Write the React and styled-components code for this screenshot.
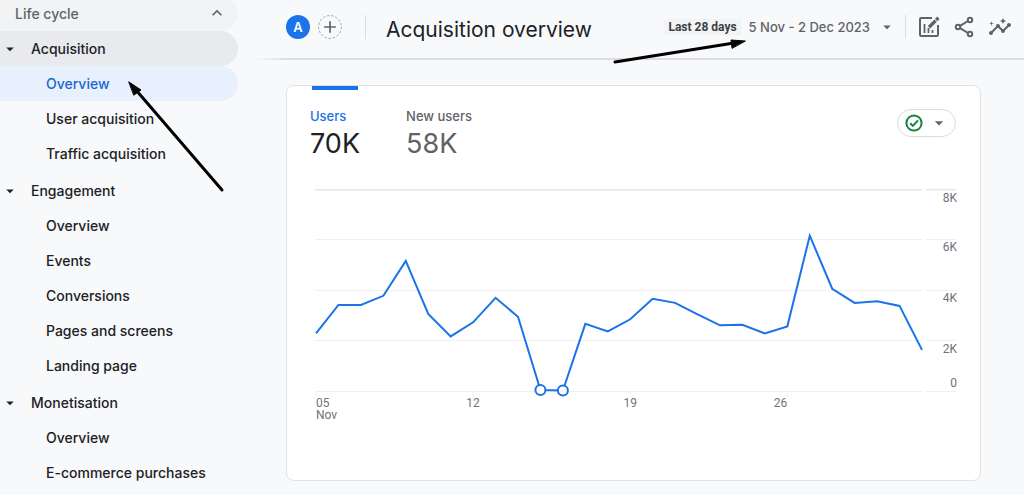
import React, { useState } from 'react';
import styled, { createGlobalStyle } from 'styled-components';
import { MdInsights, MdArrowDropDown, MdAdd, MdKeyboardArrowUp } from 'react-icons/md';

const groups = [
  { name: 'Acquisition', open: true, items: ['Overview', 'User acquisition', 'Traffic acquisition'] },
  { name: 'Engagement', items: ['Overview', 'Events', 'Conversions', 'Pages and screens', 'Landing page'] },
  { name: 'Monetisation', items: ['Overview', 'E-commerce purchases'] },
];

const metrics = [
  { name: 'Users', value: '70K' },
  { name: 'New users', value: '58K' },
];

const users = [
  2280, 3410, 3410, 3770, 5150, 3050, 2160, 2720, 3690, 2940, 40, 20, 2660, 2360,
  2840, 3650, 3490, 3035, 2600, 2620, 2280, 2560, 6150, 4050, 3490, 3550, 3370, 1630,
];
const anomalies = [10, 11];

const xAt = (day) => 1 + (day * 606) / 27;
const yAt = (value) => 202 - (value * 202) / 8000;

const yTicks = [
  { label: '8K', value: 8000, text: 13 },
  { label: '6K', value: 6000, text: 62 },
  { label: '4K', value: 4000, text: 113 },
  { label: '2K', value: 2000, text: 164 },
  { label: '0', value: 0, text: 198 },
];

const UsersChart = () => (
  <ChartSvg viewBox="0 0 642 238" role="img" aria-label="Users per day">
    {yTicks.map((tick) => {
      const y = Math.floor(yAt(tick.value)) + 0.5;
      return (
        <g key={tick.label}>
          <GridLine x1="0" x2="607" y1={y} y2={y} $top={tick.value === 8000} />
          <GridLine x1="611" x2="641" y1={y} y2={y} $top={tick.value === 8000} />
          <AxisText x="642" y={tick.text} textAnchor="end">{tick.label}</AxisText>
        </g>
      );
    })}
    {[0, 7, 14, 21].map((day) => (
      <GridLine key={day} x1={xAt(day)} x2={xAt(day)} y1="202" y2="208" />
    ))}
    <AxisText x="1" y="218">05</AxisText>
    <AxisText x="1" y="230">Nov</AxisText>
    <AxisText x={xAt(7)} y="218" textAnchor="middle">12</AxisText>
    <AxisText x={xAt(14)} y="218" textAnchor="middle">19</AxisText>
    <AxisText x={xAt(21)} y="218" textAnchor="end">26</AxisText>
    <polyline
      points={users.map((value, day) => `${xAt(day)},${yAt(value)}`).join(' ')}
      fill="none"
      stroke="#1a73e8"
      strokeWidth="2"
    />
    {anomalies.map((day) => (
      <circle key={day} cx={xAt(day)} cy={yAt(users[day])} r="5" fill="#fff" stroke="#1a73e8" strokeWidth="2" />
    ))}
  </ChartSvg>
);

const EditChartIcon = () => (
  <svg width="22" height="22" viewBox="0 0 22 22" fill="none" stroke="#5f6368" strokeWidth="2">
    <path d="M14 2H3.2Q2 2 2 3.2V18.8Q2 20 3.2 20H18.8Q20 20 20 18.8V9" />
    <path d="M6.5 8V17M10.5 12V17M14.5 14V17" strokeWidth="1.8" />
    <path d="M11 11.2L17.6 4.6" strokeWidth="3.4" />
    <path d="M18.2 4L20.4 1.8" strokeWidth="3.4" />
  </svg>
);

const ShareIcon = () => (
  <svg width="20" height="22" viewBox="0 0 20 22" fill="none" stroke="#5f6368" strokeWidth="2">
    <path d="M6 9.8L14 5M6 12.2L14 17" />
    <circle cx="4" cy="11" r="2.2" />
    <circle cx="16" cy="4" r="2.2" />
    <circle cx="16" cy="18" r="2.2" />
  </svg>
);

const CheckIcon = () => (
  <svg width="18" height="18" viewBox="0 0 18 18" fill="none" stroke="#188038" strokeWidth="2">
    <circle cx="9" cy="9" r="7.6" />
    <path d="M5.2 9.2L7.9 11.9L13 6.4" />
  </svg>
);

const App = () => {
  const [metric, setMetric] = useState('Users');

  return (
    <Page>
      <GlobalStyle />
      <Sidebar>
        <SectionButton type="button">
          Life cycle
          <MdKeyboardArrowUp size={20} />
        </SectionButton>
        {groups.map((group) => (
          <Group key={group.name}>
            <GroupButton type="button" $open={group.open}>
              <MdArrowDropDown size={18} />
              {group.name}
            </GroupButton>
            {group.items.map((item) => (
              <NavLink key={item} href="#" $active={group.open && item === 'Overview'}>
                {item}
              </NavLink>
            ))}
          </Group>
        ))}
      </Sidebar>

      <Main>
        <Header>
          <Avatar type="button">A</Avatar>
          <AddButton type="button" aria-label="Add comparison">
            <svg width="24" height="24" viewBox="0 0 24 24" fill="none">
              <circle cx="12" cy="12" r="11.4" stroke="#9aa0a6" strokeDasharray="2.4 1.8" />
            </svg>
            <MdAdd size={20} />
          </AddButton>
          <TitleDivider />
          <Title>Acquisition overview</Title>
          <DateButton type="button">
            <Preset>Last 28 days</Preset>
            <span>5 Nov - 2 Dec 2023</span>
            <MdArrowDropDown size={18} />
          </DateButton>
          <Tools>
            <IconButton type="button" aria-label="Customise report"><EditChartIcon /></IconButton>
            <IconButton type="button" aria-label="Share"><ShareIcon /></IconButton>
            <IconButton type="button" aria-label="Insights"><MdInsights size={24} /></IconButton>
          </Tools>
        </Header>

        <Card>
          <CardTop>
            {metrics.map((m) => (
              <Metric key={m.name} type="button" $active={metric === m.name} onClick={() => setMetric(m.name)}>
                <MetricName>{m.name}</MetricName>
                <MetricValue>{m.value}</MetricValue>
              </Metric>
            ))}
            <StatusButton type="button" aria-label="Data quality">
              <CheckIcon />
              <MdArrowDropDown size={20} />
            </StatusButton>
          </CardTop>
          <UsersChart />
        </Card>
      </Main>

      <Arrows width="760" height="200" viewBox="0 0 760 200" aria-hidden="true">
        <path d="M222 190L136 90" />
        <path d="M615 62L734 43" />
        <polygon points="129,82 141,90 134,95" />
        <polygon points="745,41 731,40 732,48" />
      </Arrows>
    </Page>
  );
};

export default App;

const GlobalStyle = createGlobalStyle`
  * {
    box-sizing: border-box;
  }
  body {
    margin: 0;
    background: #f8f9fb;
    color: #202124;
    font-family: Inter, 'Liberation Sans', sans-serif;
    font-size: 14px;
  }
  button {
    border: 0;
    padding: 0;
    background: none;
    color: inherit;
    font: inherit;
    cursor: pointer;
  }
`;

const Page = styled.div`
  position: relative;
  display: flex;
  min-height: 100vh;
`;

const Sidebar = styled.nav`
  flex: 0 0 238px;
  display: flex;
  flex-direction: column;
`;

const SectionButton = styled.button`
  display: flex;
  align-items: center;
  justify-content: space-between;
  height: 31px;
  padding: 0 11px 5px 15px;
  border-radius: 0 10px 18px 0;
  background: #f1f3f4;
  color: #5f6368;
  font-weight: 500;
`;

const Group = styled.div`
  display: flex;
  flex-direction: column;
  margin-bottom: 2px;
`;

const GroupButton = styled.button`
  display: flex;
  align-items: center;
  gap: 12px;
  height: 35px;
  padding: 0 1px;
  border-radius: 0 18px 18px 0;
  background: ${(props) => (props.$open ? '#e8eaed' : 'none')};
  font-weight: 500;
`;

const NavLink = styled.a`
  display: flex;
  align-items: center;
  height: 35px;
  padding-left: 46px;
  border-radius: 0 18px 18px 0;
  background: ${(props) => (props.$active ? '#e8f0fe' : 'none')};
  color: ${(props) => (props.$active ? '#1967d2' : '#202124')};
  font-weight: 500;
  text-decoration: none;
`;

const Main = styled.main`
  flex: 1;
  min-width: 0;
  padding-left: 18px;
`;

const Header = styled.header`
  display: flex;
  align-items: center;
  height: 60px;
  padding: 0 12px 6px 30px;
  background: linear-gradient(90deg, transparent, #dcdee1 30px, #dcdee1) bottom / 100% 2px no-repeat;
`;

const Avatar = styled.button`
  width: 24px;
  height: 24px;
  border-radius: 50%;
  background: #1a73e8;
  color: #fff;
  font-size: 13px;
  font-weight: 600;
`;

const AddButton = styled.button`
  display: grid;
  place-items: center;
  margin-left: 8px;
  color: #5f6368;
  > svg {
    grid-area: 1 / 1;
  }
`;

const TitleDivider = styled.div`
  width: 1px;
  height: 24px;
  margin: 0 20px 0 23px;
  background: #dadce0;
`;

const Title = styled.h1`
  margin: 0;
  padding-top: 4px;
  font-size: 21px;
  font-weight: 400;
  white-space: nowrap;
`;

const DateButton = styled.button`
  display: flex;
  align-items: center;
  margin-left: auto;
  color: #5f6368;
  font-size: 13px;
  font-weight: 500;
  white-space: nowrap;
  svg {
    margin-left: 8px;
  }
`;

const Preset = styled.span`
  margin-right: 8px;
  padding: 0 4px;
  border-radius: 2px;
  background: #f1f3f4;
  color: #3c4043;
  font-family: Roboto, sans-serif;
  font-size: 12px;
  font-weight: 700;
  line-height: 16px;
`;

const Tools = styled.div`
  display: flex;
  align-items: center;
  gap: 14px;
  height: 24px;
  margin-left: 9px;
  padding-left: 12px;
  border-left: 1px solid #dadce0;
`;

const IconButton = styled.button`
  display: flex;
  color: #5f6368;
`;

const Card = styled.section`
  margin: 25px 43px 14px 30px;
  padding: 0 23px 53px;
  border: 1px solid #e0e2e6;
  border-radius: 8px;
  background: #fff;
`;

const CardTop = styled.div`
  display: flex;
  align-items: flex-start;
  gap: 46px;
  height: 103px;
`;

const Metric = styled.button`
  display: flex;
  flex-direction: column;
  align-items: flex-start;
  color: ${(props) => (props.$active ? '#202124' : '#5f6368')};
  &::before {
    content: '';
    width: 46px;
    height: 4px;
    margin: 0 2px 16px;
    background: ${(props) => (props.$active ? '#1a73e8' : 'none')};
  }
  > :first-child {
    color: ${(props) => (props.$active ? '#1a73e8' : '#5f6368')};
  }
`;

const MetricName = styled.span`
  font-size: 13px;
  font-weight: 500;
  line-height: 20px;
`;

const MetricValue = styled.span`
  font-size: 27px;
  line-height: 36px;
`;

const StatusButton = styled.button`
  display: flex;
  align-items: center;
  gap: 6px;
  height: 28px;
  margin: 23px 1px 0 auto;
  padding: 0 6px 0 7px;
  border: 1px solid #dadce0;
  border-radius: 14px;
  color: #5f6368;
`;

const ChartSvg = styled.svg`
  display: block;
  width: calc(100% - 5px);
  margin-left: 5px;
`;

const GridLine = styled.line`
  stroke: ${(props) => (props.$top ? '#e6e6e6' : '#f0f0f0')};
  stroke-width: ${(props) => (props.$top ? 2 : 1)};
`;

const AxisText = styled.text`
  fill: #6f7377;
  font-family: Roboto, sans-serif;
  font-size: 12px;
`;

const Arrows = styled.svg`
  position: absolute;
  top: 0;
  left: 0;
  pointer-events: none;
  fill: #000;
  stroke: #000;
  stroke-linecap: round;
  path {
    stroke-width: 3;
  }
`;
